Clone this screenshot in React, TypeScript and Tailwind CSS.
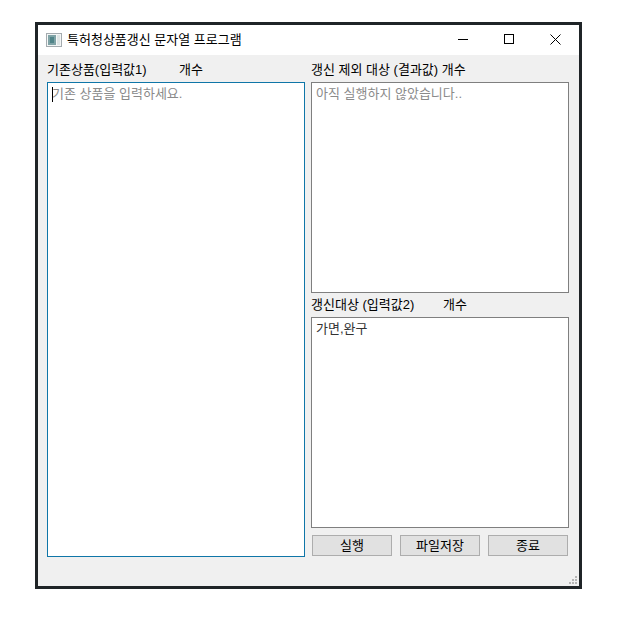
const FONT = "font-['Liberation_Sans','Noto_Sans_CJK_KR',sans-serif]";

function TitleIcon() {
  return (
    <svg width="16" height="14" viewBox="0 0 16 14" className="shrink-0">
      <rect x="0.5" y="0.5" width="15" height="13" fill="#f4f6f6" stroke="#a4abaf" />
      <rect x="2" y="2" width="8" height="10" fill="#7fa3a6" />
      <rect x="4" y="4" width="4" height="6" fill="#4f8488" />
      <rect x="11" y="2" width="3" height="10" fill="#dde4e4" />
    </svg>
  );
}

function Box({ text, muted, focused, className }: { text: string; muted?: boolean; focused?: boolean; className: string }) {
  return (
    <div
      className={`relative border bg-white px-[4px] pt-[2px] text-[13px] leading-[17px] ${
        focused ? "border-[#0f76a8]" : "border-[#7f7f7f]"
      } ${muted ? "text-[#8a8a8a]" : "text-[#333333]"} ${className}`}
    >
      {focused && <span className="absolute left-[4px] top-[4px] h-[15px] w-px bg-black" />}
      {text}
    </div>
  );
}

function Btn({ label }: { label: string }) {
  return (
    <div className="flex h-[21px] w-[80px] items-center justify-center border border-[#adadad] bg-[#e1e1e1] text-[13px] text-black">
      {label}
    </div>
  );
}

export default function App() {
  return (
    <div className={`min-h-[625px] bg-white pl-[35px] pt-[22px] ${FONT}`}>
      <div className="flex h-[567px] w-[547px] flex-col border-[3px] border-[#1f2427] bg-[#f0f0f0]">
        <div className="flex h-[30px] shrink-0 items-center bg-white pl-[8px]">
          <TitleIcon />
          <span className="ml-[5px] text-[13px] text-black">특허청상품갱신 문자열 프로그램</span>
          <div className="ml-auto flex h-full items-center pb-[2px] pr-px">
            <div className="flex h-full w-[46px] items-center justify-center">
              <svg width="10" height="10" viewBox="0 0 10 10"><path d="M0 5.5H10" stroke="#000" /></svg>
            </div>
            <div className="flex h-full w-[46px] items-center justify-center">
              <svg width="10" height="10" viewBox="0 0 10 10"><rect x="0.5" y="0.5" width="9" height="9" fill="none" stroke="#000" /></svg>
            </div>
            <div className="flex h-full w-[46px] items-center justify-center">
              <svg width="11" height="11" viewBox="0 0 11 11"><path d="M0.5 0.5L10.5 10.5M10.5 0.5L0.5 10.5" stroke="#000" /></svg>
            </div>
          </div>
        </div>

        <div className="relative flex flex-1 gap-[6px] px-[9px]">
          <div className="flex w-[258px] flex-col">
            <div className="flex h-[27px] items-center pt-[2px] text-[13px] text-black">
              <span className="w-[132px]">기존상품(입력값1)</span>
              <span>개수</span>
            </div>
            <Box text="기존 상품을 입력하세요." muted focused className="h-[475px]" />
          </div>

          <div className="flex w-[258px] flex-col">
            <div className="flex h-[27px] items-center pt-[2px] text-[13px] text-black">
              <span>갱신 제외 대상 (결과값) 개수</span>
            </div>
            <Box text="아직 실행하지 않았습니다.." muted className="h-[211px]" />
            <div className="flex h-[24px] items-center text-[13px] text-black">
              <span className="w-[132px]">갱신대상 (입력값2)</span>
              <span>개수</span>
            </div>
            <Box text="가면,완구" className="h-[211px]" />
            <div className="mt-[7px] flex gap-[8px] pl-px">
              <Btn label="실행" />
              <Btn label="파일저장" />
              <Btn label="종료" />
            </div>
          </div>

          <svg width="10" height="10" viewBox="0 0 10 10" className="absolute bottom-[1px] right-[1px]">
            <g fill="#b5b5b5">
              <rect x="7" y="1" width="2" height="2" />
              <rect x="4" y="4" width="2" height="2" />
              <rect x="7" y="4" width="2" height="2" />
              <rect x="1" y="7" width="2" height="2" />
              <rect x="4" y="7" width="2" height="2" />
              <rect x="7" y="7" width="2" height="2" />
            </g>
          </svg>
        </div>
      </div>
    </div>
  );
}
